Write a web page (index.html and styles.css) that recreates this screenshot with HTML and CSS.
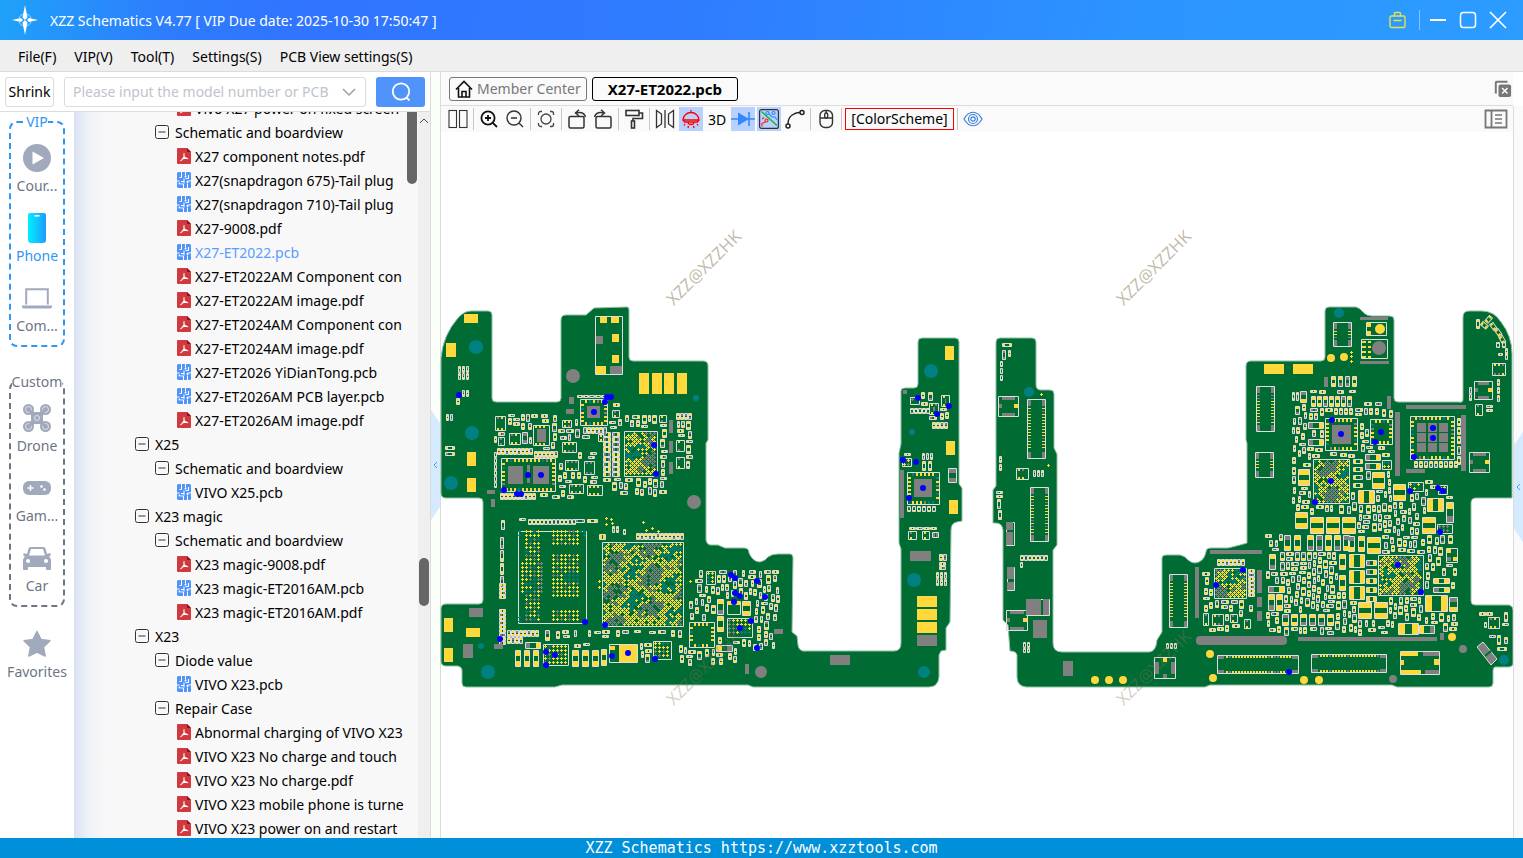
FILE: index.html
```html
<!DOCTYPE html>
<html lang="en">
<head>
    <meta charset="UTF-8">
    <meta name="viewport" content="width=device-width, initial-scale=1.0">
    <title>XZZ Schematics</title>
    <link rel="stylesheet" href="styles.css">
</head>
<body>
    <!-- shared icons -->
    <svg class="defs" aria-hidden="true">
        <symbol id="pdf" viewBox="0 0 14 16">
            <path d="M1 0h9l4 4v11a1 1 0 0 1-1 1H1a1 1 0 0 1-1-1V1a1 1 0 0 1 1-1z" fill="#d0393e"/>
            <path d="M10 0v4h4z" fill="#8f1418"/>
            <path d="M7 5.500v3.200c-.5 1.600-1.500 3-3.200 4M7 8.700c1 1.300 2.200 2 3.800 2M5.200 11c1.300-.7 2.700-1 4.300-.9" fill="none" stroke="#fff" stroke-width="1.100" stroke-linecap="round"/>
        </symbol>
        <symbol id="pcb" viewBox="0 0 14 16">
            <rect width="14" height="16" rx="1.500" fill="#4f93fb"/>
            <path d="M4.500 0v5.500H2.500M8.500 0v3.500M8.500 6.500h3V3M0 9h2.500M4 9.500h3v-3M6.500 16v-4H4M10.500 16v-4.500M10.500 9h3.500M7 9.500v2" fill="none" stroke="#fff" stroke-width="1"/>
            <circle cx="8.500" cy="4.500" r="1" fill="#fff"/>
            <circle cx="2.500" cy="11.500" r="1" fill="#fff"/>
            <circle cx="10.500" cy="10" r="1" fill="#fff"/>
        </symbol>
        <symbol id="minus" viewBox="0 0 14 14">
            <rect x=".5" y=".5" width="13" height="13" rx="2" fill="none" stroke="#333"/>
            <path d="M3.500 7h7" stroke="#333"/>
        </symbol>
    </svg>

    <header class="titlebar">
        <svg class="logo" viewBox="0 0 28 32">
            <path d="M14 1l2.500 12.500L14 16l-2.500-2.500zM14 31l2.500-12.500L14 16l-2.500 2.500zM1 16l9-2 2 2-2 2zM27 16l-9-2-2 2 2 2z" fill="#fff"/>
            <path d="M8 14a6.500 6.500 0 0 1 4-4M16 10a6.500 6.500 0 0 1 4 4M20 18a6.500 6.500 0 0 1-4 4M12 22a6.500 6.500 0 0 1-4-4" fill="none" stroke="#9fd4ff"/>
        </svg>
        <h1>XZZ Schematics V4.77 [ VIP Due date: 2025-10-30 17:50:47 ]</h1>
        <div class="window-buttons">
            <button aria-label="Toolbox"><svg viewBox="0 0 18 18" fill="none" stroke="#e3e34a" stroke-width="1.400"><rect x="1" y="5" width="15" height="11.500" rx="1.500"/><path d="M5.500 5V2.500a1 1 0 0 1 1-1h4a1 1 0 0 1 1 1V5M4.500 9.500h8"/></svg></button>
            <span class="divider"></span>
            <button aria-label="Minimize"><svg viewBox="0 0 18 18" stroke="#fff" stroke-width="2"><path d="M1 9h16"/></svg></button>
            <button aria-label="Maximize"><svg viewBox="0 0 18 18" fill="none" stroke="#fff" stroke-width="1.500"><rect x="1.500" y="1.500" width="15" height="15" rx="3"/></svg></button>
            <button aria-label="Close"><svg viewBox="0 0 18 18" stroke="#fff" stroke-width="1.700"><path d="M1 1l16 16M17 1L1 17"/></svg></button>
        </div>
    </header>

    <nav class="menubar">
        <a href="#">File(F)</a>
        <a href="#">VIP(V)</a>
        <a href="#">Tool(T)</a>
        <a href="#">Settings(S)</a>
        <a href="#">PCB View settings(S)</a>
    </nav>

    <main class="workspace">
        <aside class="panel">
            <form class="search">
                <button type="button" class="shrink">Shrink</button>
                <div class="combo">
                    <input type="text" aria-label="Model number" placeholder="Please input the model number or PCB">
                    <svg viewBox="0 0 14 8"><path d="M1 1l6 6 6-6" fill="none" stroke="#999fa8" stroke-width="1.500"/></svg>
                </div>
                <button type="button" class="go" aria-label="Search"><svg viewBox="0 0 20 20" fill="none" stroke="#fff" stroke-width="1.800"><circle cx="10" cy="9.500" r="8.200"/><path d="M15.500 15.500l3 3"/></svg></button>
            </form>
            <div class="browser">
                <div class="categories">
                    <fieldset class="group vip">
                        <legend>VIP</legend>
                        <button class="cat">
                            <svg viewBox="0 0 28 28"><circle cx="14" cy="14" r="14" fill="#a1a9bd"/><path d="M9.500 7.500l11.500 6.500-11.500 6.500z" fill="#fff"/></svg>
                            <span>Cour...</span>
                        </button>
                        <button class="cat active">
                            <svg viewBox="0 0 28 28"><defs><linearGradient id="phone"><stop offset="0" stop-color="#00efff"/><stop offset="1" stop-color="#1e9cff"/></linearGradient></defs><path d="M7 -1h14a2 2 0 0 1 2 2v25a3 3 0 0 1-3 3H8a3 3 0 0 1-3-3V1a2 2 0 0 1 2-2z" fill="url(#phone)"/><path d="M11.500 1.800h5" stroke="#fff" stroke-width="1.500"/></svg>
                            <span>Phone</span>
                        </button>
                        <button class="cat">
                            <svg viewBox="0 0 28 28"><path d="M3.200 20.500V5.200h21.600v15.300" fill="none" stroke="#a1a9bd" stroke-width="2"/><path d="M-1 21.500h30v1.500a2 2 0 0 1-2 1.500H1a2 2 0 0 1-2-1.500z" fill="#a1a9bd"/></svg>
                            <span>Com...</span>
                        </button>
                    </fieldset>
                    <fieldset class="group custom">
                        <legend>Custom</legend>
                        <button class="cat">
                            <svg viewBox="0 0 28 28"><g fill="#a1a9bd"><circle cx="5.500" cy="5.500" r="5.500"/><circle cx="22.500" cy="5.500" r="5.500"/><circle cx="5.500" cy="22.500" r="5.500"/><circle cx="22.500" cy="22.500" r="5.500"/><path d="M6 3l5 5h6l5-5 3 3-5 5v6l5 5-3 3-5-5h-6l-5 5-3-3 5-5v-6L3 6z"/></g><g fill="none" stroke="#dfe2ea"><circle cx="5.500" cy="5.500" r="3"/><circle cx="22.500" cy="5.500" r="3"/><circle cx="5.500" cy="22.500" r="3"/><circle cx="22.500" cy="22.500" r="3"/><circle cx="14" cy="14" r="2.500"/></g><path d="M5 5l6 6M23 5l-6 6M5 23l6-6M23 23l-6-6" stroke="#a1a9bd" stroke-width="3"/></svg>
                            <span>Drone</span>
                        </button>
                        <button class="cat">
                            <svg viewBox="0 0 28 28"><rect y="7" width="28" height="14" rx="6" fill="#a1a9bd"/><path d="M4.500 14h6M7.500 11v6" stroke="#fff" stroke-width="1.500"/><circle cx="18.500" cy="12.500" r="1.300" fill="#fff"/><circle cx="21.500" cy="15.500" r="1.300" fill="#fff"/></svg>
                            <span>Gam...</span>
                        </button>
                        <button class="cat">
                            <svg viewBox="0 0 28 28"><path fill-rule="evenodd" d="M7.500 3h13a2 2 0 0 1 2 1.500L24 10l3.500-1v3H26l2 3.500V25a1 1 0 0 1-1 1h-3a1 1 0 0 1-1-1v-2H5v2a1 1 0 0 1-1 1H1a1 1 0 0 1-1-1v-9.500L2 12H.5V9L4 10l1.500-5.500a2 2 0 0 1 2-1.500zM8 5l-2 6.500h16L20 5zM5 15a2 2 0 1 0 .1 4A2 2 0 0 0 5 15zm18 0a2 2 0 1 0 .1 4 2 2 0 0 0-.1-4z" fill="#a1a9bd"/></svg>
                            <span>Car</span>
                        </button>
                    </fieldset>
                    <button class="cat favorites">
                        <svg viewBox="0 0 28 28"><path d="M14 1.500l4 8 9 1.200-6.500 6.300 1.600 9L14 22l-8.100 4 1.600-9L1 10.700l9-1.200z" fill="#a1a9bd" stroke="#a1a9bd" stroke-width="1.500" stroke-linejoin="round"/></svg>
                        <span>Favorites</span>
                    </button>
                </div>

                <div class="tree-view">
                    <ul class="tree">
                        <li class="file"><svg><use href="#pdf"/></svg>Vivo X27 power on fixed screen</li>
                        <li class="folder"><svg><use href="#minus"/></svg>Schematic and boardview</li>
                        <li class="file"><svg><use href="#pdf"/></svg>X27 component notes.pdf</li>
                        <li class="file"><svg><use href="#pcb"/></svg>X27(snapdragon 675)-Tail plug</li>
                        <li class="file"><svg><use href="#pcb"/></svg>X27(snapdragon 710)-Tail plug</li>
                        <li class="file"><svg><use href="#pdf"/></svg>X27-9008.pdf</li>
                        <li class="file selected"><svg><use href="#pcb"/></svg>X27-ET2022.pcb</li>
                        <li class="file"><svg><use href="#pdf"/></svg>X27-ET2022AM Component con</li>
                        <li class="file"><svg><use href="#pdf"/></svg>X27-ET2022AM image.pdf</li>
                        <li class="file"><svg><use href="#pdf"/></svg>X27-ET2024AM Component con</li>
                        <li class="file"><svg><use href="#pdf"/></svg>X27-ET2024AM image.pdf</li>
                        <li class="file"><svg><use href="#pcb"/></svg>X27-ET2026 YiDianTong.pcb</li>
                        <li class="file"><svg><use href="#pcb"/></svg>X27-ET2026AM PCB layer.pcb</li>
                        <li class="file"><svg><use href="#pdf"/></svg>X27-ET2026AM image.pdf</li>
                        <li class="model"><svg><use href="#minus"/></svg>X25</li>
                        <li class="folder"><svg><use href="#minus"/></svg>Schematic and boardview</li>
                        <li class="file"><svg><use href="#pcb"/></svg>VIVO X25.pcb</li>
                        <li class="model"><svg><use href="#minus"/></svg>X23 magic</li>
                        <li class="folder"><svg><use href="#minus"/></svg>Schematic and boardview</li>
                        <li class="file"><svg><use href="#pdf"/></svg>X23 magic-9008.pdf</li>
                        <li class="file"><svg><use href="#pcb"/></svg>X23 magic-ET2016AM.pcb</li>
                        <li class="file"><svg><use href="#pdf"/></svg>X23 magic-ET2016AM.pdf</li>
                        <li class="model"><svg><use href="#minus"/></svg>X23</li>
                        <li class="folder"><svg><use href="#minus"/></svg>Diode value</li>
                        <li class="file"><svg><use href="#pcb"/></svg>VIVO X23.pcb</li>
                        <li class="folder"><svg><use href="#minus"/></svg>Repair Case</li>
                        <li class="file"><svg><use href="#pdf"/></svg>Abnormal charging of VIVO X23</li>
                        <li class="file"><svg><use href="#pdf"/></svg>VIVO X23 No charge and touch</li>
                        <li class="file"><svg><use href="#pdf"/></svg>VIVO X23 No charge.pdf</li>
                        <li class="file"><svg><use href="#pdf"/></svg>VIVO X23 mobile phone is turne</li>
                        <li class="file"><svg><use href="#pdf"/></svg>VIVO X23 power on and restart</li>
                    </ul>
                    <div class="inner-thumb"></div>
                </div>
                <div class="scrollbar">
                    <svg viewBox="0 0 10 6"><path d="M1 5l4-4 4 4" fill="none" stroke="#444"/></svg>
                    <div class="thumb"></div>
                </div>
            </div>
        </aside>

        <div class="splitter"><button class="handle" aria-label="Collapse left panel"><svg viewBox="0 0 5 8"><path d="M4 1L1 4l3 3" fill="none" stroke="#4d9fe8"/></svg></button></div>

        <section class="viewer">
            <div class="tabs">
                <button class="tab"><svg viewBox="0 0 18 18" fill="none" stroke="#111" stroke-width="1.600"><path d="M1 9.500L9 1.500l8 8M3.500 8v9h11V8M7 17v-5.500h4V17"/></svg>Member Center</button>
                <button class="tab current">X27-ET2022.pcb</button>
                <button class="icon close-all" aria-label="Close all"><svg viewBox="0 0 20 20"><path d="M2 15V3a1 1 0 0 1 1-1h12" fill="none" stroke="#777" stroke-width="2.200"/><rect x="5" y="5" width="14" height="14" rx="2" fill="#777"/><path d="M9 9l6 6M15 9l-6 6" stroke="#fff" stroke-width="1.600"/></svg></button>
            </div>
            <div class="toolbar">
                <button class="icon" aria-label="Split view"><svg viewBox="0 0 20 20" fill="none" stroke="#333" stroke-width="1.100"><rect x="1" y="1.500" width="7.500" height="17"/><rect x="11.500" y="1.500" width="7.500" height="17"/></svg></button>
                <span class="sep"></span>
                <button class="icon" aria-label="Zoom in"><svg viewBox="0 0 20 20" fill="none" stroke="#111" stroke-width="1.800"><circle cx="9" cy="9" r="6.600"/><path d="M13.800 13.800L18 18M6 9h6M9 6v6"/></svg></button>
                <button class="icon" aria-label="Zoom out"><svg viewBox="0 0 20 20" fill="none" stroke="#333" stroke-width="1.400"><circle cx="9" cy="9" r="7"/><path d="M14 14l4 4M6 9h6"/></svg></button>
                <span class="sep"></span>
                <button class="icon" aria-label="Fit"><svg viewBox="0 0 20 20" fill="none" stroke="#444" stroke-width="1.300"><circle cx="10" cy="10" r="5"/><path d="M2.500 6V4.500a2 2 0 0 1 2-2H6M14 2.500h1.500a2 2 0 0 1 2 2V6M17.500 14v1.500a2 2 0 0 1-2 2H14M6 17.500H4.500a2 2 0 0 1-2-2V14"/></svg></button>
                <span class="sep"></span>
                <button class="icon" aria-label="Rotate left"><svg viewBox="0 0 20 20" fill="none" stroke="#333" stroke-width="1.500"><rect x="2" y="7.500" width="15" height="11.500" rx="1.500"/><path d="M9 4c4-1 8-1 9.500 4M12 .8L8.500 4l3.500 3"/></svg></button>
                <button class="icon" aria-label="Rotate right"><svg viewBox="0 0 20 20" fill="none" stroke="#333" stroke-width="1.500"><rect x="3" y="7.500" width="15" height="11.500" rx="1.500"/><path d="M11 4C7 3 3 3 1.500 8M8 .8L11.500 4 8 7"/></svg></button>
                <span class="sep"></span>
                <button class="icon" aria-label="Paint"><svg viewBox="0 0 20 20" fill="none" stroke="#333" stroke-width="1.600"><rect x="2" y="1.500" width="13" height="5"/><path d="M15 4h3.500v5.500H9V12"/><rect x="7.500" y="12" width="3" height="7"/></svg></button>
                <span class="sep"></span>
                <button class="icon" aria-label="Mirror"><svg viewBox="0 0 20 20" fill="none" stroke="#333" stroke-width="1.300"><path d="M1.500 1.500v17l5-3.500V5zM18.500 1.500v17l-5-3.500V5zM10 1v18"/></svg></button>
                <button class="icon on" aria-label="Highlight"><svg viewBox="0 0 20 20" fill="none" stroke="#f00" stroke-width="1.300"><path d="M2 11a8 7.500 0 0 1 16 0zM10 1v2.500M2 11l1.500 2h13L18 11M7 13a3 2.500 0 0 0 6 0M4 15l-1 1.500M16 15l1 1.500M7.500 17l-.5 2M12.500 17l.5 2"/></svg></button>
                <button class="icon text">3D</button>
                <button class="icon on" aria-label="Diode"><svg class="wide" viewBox="0 0 24 20"><path d="M0 10h24M18 3v14" stroke="#3388ff" stroke-width="1.600"/><path d="M7 3.500l11 6.500-11 6.500z" fill="#3388ff"/></svg></button>
                <button class="icon on" aria-label="Net"><svg viewBox="0 0 20 20" fill="none" stroke-width="1.200"><rect x=".6" y=".6" width="18.800" height="18.800" rx="2" stroke="#333"/><path d="M2.500 2.500L18 16.500" stroke="#13b83c" stroke-width="1.500"/><circle cx="8.500" cy="4" r="1.500" stroke="#38f"/><path d="M10 5l3 3h3l2 3" stroke="#38f"/><circle cx="14.500" cy="4" r="1.500" stroke="#38f"/><circle cx="7.500" cy="11.500" r="1.500" stroke="#f22"/><path d="M6.500 13L3 14.500v3M3 10l2-1.500" stroke="#f22"/></svg></button>
                <button class="icon" aria-label="Curve"><svg viewBox="0 0 20 20" fill="none" stroke="#222" stroke-width="1.500"><circle cx="17" cy="3.500" r="2"/><circle cx="3" cy="17" r="2"/><path d="M3 15C3 8 8 4 15 3.500"/></svg></button>
                <span class="sep"></span>
                <button class="icon" aria-label="Mouse"><svg viewBox="0 0 20 20" fill="none" stroke="#333" stroke-width="1.400"><rect x="4" y="1.500" width="12.500" height="17" rx="5"/><path d="M4 9h12.500M10.200 1.500V4"/><rect x="8.700" y="4" width="3" height="5" rx="1.500"/></svg></button>
                <span class="sep"></span>
                <button class="scheme">[ColorScheme]</button>
                <span class="sep"></span>
                <button class="icon" aria-label="View"><svg viewBox="0 0 20 20" fill="none" stroke="#3d7fd9" stroke-width="1.200"><path d="M1 10c5-9 13-9 18 0-5 9-13 9-18 0z"/><circle cx="10" cy="10" r="4.500"/><circle cx="10" cy="10" r="2.200"/></svg></button>
                <button class="icon list" aria-label="List"><svg class="wide" viewBox="0 0 24 20" fill="none" stroke="#777" stroke-width="1.800"><path d="M1.500 1.500h21v17h-21zM7.500 1.500v17"/><path d="M11 6h7M11 10h7M11 14h7" stroke-width="1.300"/></svg></button>
            </div>
            <div class="canvas">
                <svg id="board" viewBox="441 132 1072 706" role="img" aria-label="Boardview"></svg>
            </div>
        </section>
        <div class="splitter right"><button class="handle" aria-label="Open right panel"><svg viewBox="0 0 5 8"><path d="M4 1L1 4l3 3" fill="none" stroke="#4d9fe8"/></svg></button></div>
    </main>

    <footer class="statusbar">XZZ Schematics https://www.xzztools.com</footer>
    <script src="board.js"></script>
</body>
</html>
```
FILE: styles.css
```css
* {
    box-sizing: border-box;
}
body {
    margin: 0;
    height: 100vh;
    display: flex;
    flex-direction: column;
    overflow: hidden;
    font-family: "Noto Sans", "Noto Sans CJK SC", sans-serif;
    font-size: 14px;
    color: #000;
    background: #fff;
}
button {
    font: inherit;
    color: inherit;
    background: none;
    border: none;
    padding: 0;
    cursor: pointer;
}
svg {
    display: block;
    overflow: visible;
}
.defs {
    position: absolute;
    width: 0;
    height: 0;
}

/* title bar */
.titlebar {
    flex: none;
    height: 40px;
    display: flex;
    align-items: center;
    gap: 11px;
    padding: 0 16px 0 11px;
    color: #fff;
    background: linear-gradient(100deg, #1fa2f9 0, #2d7dfd 11%, #3074ff 20%, #2f7cff 45%, #2c94ff 75%, #2c9cff 100%);
}
.logo {
    width: 28px;
    height: 32px;
}
.titlebar h1 {
    margin: 0;
    font-size: 14px;
    font-weight: normal;
}
.window-buttons {
    display: flex;
    align-items: center;
    gap: 12px;
    margin-left: auto;
}
.window-buttons button,
.window-buttons svg {
    width: 18px;
    height: 18px;
}
.window-buttons .divider {
    width: 1px;
    height: 20px;
    margin-right: -3px;
    background: #83c3ff;
}

/* menu */
.menubar {
    flex: none;
    height: 32px;
    display: flex;
    align-items: center;
    gap: 18px;
    padding: 2px 18px 0;
    background: #efefef;
    border-bottom: 1px solid #dcdcdc;
}
.menubar a {
    color: #000;
    text-decoration: none;
}

.workspace {
    flex: 1;
    min-height: 0;
    display: flex;
}

/* left panel */
.panel {
    width: 431px;
    display: flex;
    flex-direction: column;
    border-right: 1px solid #dcdcdc;
}
.search {
    flex: none;
    height: 40px;
    display: flex;
    align-items: center;
    gap: 10px;
    padding: 0 5px;
    border-bottom: 1px solid #dcdcdc;
}
.shrink {
    width: 49px;
    height: 30px;
    border: 1px solid #dcdcdc;
    border-radius: 3px;
}
.combo {
    flex: 1;
    height: 30px;
    display: flex;
    align-items: center;
    gap: 7px;
    padding: 0 9px 0 8px;
    border: 1px solid #dcdcdc;
    border-radius: 3px;
}
.combo input {
    flex: 1;
    min-width: 0;
    padding: 0;
    border: none;
    outline: none;
    font: inherit;
}
.combo input::placeholder {
    color: #c0c4cc;
}
.combo svg {
    width: 14px;
    height: 8px;
}
.go {
    width: 49px;
    height: 30px;
    display: flex;
    align-items: center;
    justify-content: center;
    border-radius: 3px;
    background: #4f93fb;
}
.go svg {
    width: 20px;
    height: 20px;
}
.browser {
    flex: 1;
    min-height: 0;
    display: flex;
}
.categories {
    width: 74px;
    flex: none;
    color: #6d7585;
}
.group {
    min-width: 0;
    height: 235px;
    margin: 0 9px;
    padding: 12px 0 0;
    border: 2px dashed #2f97f3;
    border-radius: 8px;
}
.group legend {
    margin: 0 auto;
    padding: 0;
    line-height: 20px;
}
.vip legend {
    color: #2f97f3;
}
.custom {
    margin-top: 25px;
    border-color: #6d7585;
}
.cat {
    width: 100%;
    height: 70px;
    display: flex;
    flex-direction: column;
    align-items: center;
    gap: 4px;
}
.cat svg {
    width: 28px;
    height: 28px;
}
.cat span {
    line-height: 20px;
}
.cat.active {
    color: #2f97f3;
}
.favorites {
    margin-top: 23px;
}

/* file tree */
.tree-view {
    position: relative;
    flex: 1;
    min-width: 0;
    overflow: hidden;
    background: linear-gradient(90deg, #d9e1f2 0, #eef1f6 14px, #f8f8f8 34px);
}
.tree {
    list-style: none;
    margin: -16px 11px 0 0;
    padding: 0;
    overflow: hidden;
}
.tree li {
    height: 24px;
    display: flex;
    align-items: center;
    gap: 4px;
    white-space: nowrap;
}
.tree svg {
    flex: none;
    width: 14px;
    height: 16px;
}
.tree .model,
.tree .folder {
    gap: 6px;
}
.tree .model svg,
.tree .folder svg {
    height: 14px;
}
.tree .model {
    padding-left: 61px;
}
.tree .folder {
    padding-left: 81px;
}
.tree .file {
    padding-left: 103px;
}
.tree .selected {
    color: #5c9bff;
}
.inner-thumb {
    position: absolute;
    top: 0;
    right: 1px;
    width: 10px;
    height: 72px;
    border-radius: 0 0 5px 5px;
    background: #666;
}
.scrollbar {
    width: 12px;
    padding: 6px 1px;
    background: #efefef;
}
.scrollbar svg {
    width: 10px;
    height: 6px;
}
.thumb {
    height: 48px;
    margin-top: 434px;
    border-radius: 5px;
    background: #666;
}

/* splitters with the collapse handles */
.splitter {
    width: 9px;
    flex: none;
    display: flex;
    align-items: center;
    background: #fafffa;
}
.splitter .handle {
    width: 9px;
    height: 110px;
    margin-top: 20px;
    padding: 0 2px;
    background: #d5eaff;
    clip-path: polygon(0 0, 100% 12%, 100% 88%, 0 100%);
}
.splitter svg {
    width: 5px;
    height: 8px;
}
.splitter.right {
    width: 10px;
    margin-top: 34px;
    border-left: 1px solid #dcdcdc;
    background: #fafafa;
}
.splitter.right .handle {
    margin-top: 30px;
    clip-path: polygon(0 12%, 100% 0, 100% 100%, 0 88%);
}

/* viewer */
.viewer {
    flex: 1;
    min-width: 0;
    display: flex;
    flex-direction: column;
    border-left: 1px solid #dcdcdc;
}
.tabs {
    flex: none;
    height: 34px;
    display: flex;
    align-items: center;
    gap: 5px;
    padding-left: 8px;
    background: #fafafa;
    border-bottom: 1px solid #dcdcdc;
}
.tab {
    height: 24px;
    display: flex;
    align-items: center;
    gap: 4px;
    padding: 0 5px;
    border: 1px solid #777;
    border-radius: 3px;
    color: #777;
}
.tab svg {
    width: 18px;
    height: 18px;
}
.tab.current {
    padding: 0 15px;
    border-color: #000;
    color: #000;
    font-size: 15px;
    font-weight: bold;
}
.toolbar {
    flex: none;
    height: 26px;
    display: flex;
    align-items: center;
    gap: 2px;
    padding: 0 5px;
    background: #fafafa;
}
.icon {
    width: 24px;
    height: 24px;
    flex: none;
    display: flex;
    align-items: center;
    justify-content: center;
}
.icon svg {
    width: 20px;
    height: 20px;
}
.close-all {
    width: 20px;
    margin-left: auto;
}
.close-all svg {
    width: 18px;
    height: 18px;
}
.icon .wide {
    width: 24px;
}
.icon.on {
    background: #b8d2fd;
}
.sep {
    width: 1px;
    height: 22px;
    margin: 0 1px;
    background: #c8c8c8;
}
.scheme {
    width: 109px;
    height: 22px;
    border: 1px solid #f00;
    line-height: 20px;
}
.list {
    margin-left: auto;
}
.canvas {
    flex: 1;
    min-height: 0;
    background: #fff;
}
#board {
    width: 100%;
    height: 100%;
}
.soldermask {
    fill: #006b33;
    stroke: #8fbfa3;
}
.frames {
    fill: none;
    stroke: #dedede;
}
.watermark {
    font-size: 17px;
    fill: #8a7a5c;
    fill-opacity: 0.5;
    text-anchor: middle;
}
.watermark.low {
    fill-opacity: 0.35;
}

.statusbar {
    flex: none;
    height: 20px;
    line-height: 20px;
    text-align: center;
    color: #fff;
    background: #0090d9;
    font-family: "DejaVu Sans Mono", monospace;
    font-size: 15px;
}
```
FILE: board.js
```js
const svgNS = "http://www.w3.org/2000/svg";
const board = document.getElementById("board");

const Y = "#ffd83c", G = "#808080", T = "#008080", B = "#0000ff";
const paths = { [Y]: [], [G]: [], [T]: [], [B]: [] };
const frames = [];
const used = new Uint8Array(1600 * 860);

let seed = 7;
function rnd() {
    seed = (seed * 16807) % 2147483647;
    return seed / 2147483647;
}

function el(name, attrs, text) {
    const node = document.createElementNS(svgNS, name);
    for (const key in attrs) node.setAttribute(key, attrs[key]);
    if (text) node.textContent = text;
    board.appendChild(node);
}

function mark(x, y, w, h) {
    for (let j = Math.floor(y); j <= y + h; j++)
        for (let i = Math.floor(x); i <= x + w; i++) used[j * 1600 + i] = 1;
}
function isFree(x, y, w, h) {
    for (let j = y; j <= y + h; j++)
        for (let i = x; i <= x + w; i++) if (used[j * 1600 + i]) return false;
    return true;
}
function rect(c, x, y, w, h) {
    paths[c].push(`M${x} ${y}h${w}v${h}h${-w}z`);
}
function pad(c, x, y, w, h) {
    rect(c, x, y, w, h);
    mark(x, y, w, h);
}
function frame(x, y, w, h) {
    frames.push(`M${x + 0.5} ${y + 0.5}h${w - 1}v${h - 1}h${1 - w}z`);
    mark(x, y, w, h);
}
function dot(c, x, y, r) {
    paths[c].push(`M${x - r} ${y}a${r} ${r} 0 1 0 ${2 * r} 0a${r} ${r} 0 1 0 ${-2 * r} 0z`);
    mark(x - r, y - r, 2 * r, 2 * r);
}
function cross(c, x, y) {
    paths[c].push(`M${x} ${y + 1}h3v1h-3zM${x + 1} ${y}h1v3h-1z`);
}

// two-terminal part: frame with a pad at each end
function smd(x, y, w, h, c1, c2) {
    c1 = c1 || (rnd() < 0.72 ? Y : G);
    c2 = c2 || (rnd() < 0.72 ? Y : G);
    frame(x, y, w, h);
    if (w > h) {
        const p = Math.max(1, Math.round((w - 2) * 0.3));
        rect(c1, x + 1, y + 1, p, h - 2);
        rect(c2, x + w - 1 - p, y + 1, p, h - 2);
    } else {
        const p = Math.max(1, Math.round((h - 2) * 0.3));
        rect(c1, x + 1, y + 1, w - 2, p);
        rect(c2, x + 1, y + h - 1 - p, w - 2, p);
    }
}
function row(x, y, n, dx, dy, w, h, c1, c2) {
    for (let i = 0; i < n; i++) smd(x + i * dx, y + i * dy, w, h, c1, c2);
}

// small multi-pin chip
function chip(x, y, w, h, center) {
    frame(x, y, w, h);
    for (let i = 2; i < w - 3; i += 4) {
        rect(rnd() < 0.6 ? Y : G, x + i, y + 1, 2, 2);
        rect(rnd() < 0.6 ? Y : G, x + i, y + h - 3, 2, 2);
    }
    if (center) rect(center, x + 4, y + 4, w - 8, h - 8);
}

// pads all round the frame
function qfn(x, y, w, h) {
    frame(x, y, w, h);
    const pick = () => { const v = rnd(); return v < 0.75 ? Y : v < 0.88 ? G : T; };
    for (let i = 5; i < w - 5; i += 4) {
        rect(pick(), x + i, y + 1, 2, 3);
        rect(pick(), x + i, y + h - 4, 2, 3);
    }
    for (let i = 5; i < h - 5; i += 4) {
        rect(pick(), x + 1, y + i, 3, 2);
        rect(pick(), x + w - 4, y + i, 3, 2);
    }
}

// board to board connector
function conn(x, y, w, h) {
    frame(x, y, w, h);
    const v = h > w;
    const len = v ? h : w;
    for (let i = 9; i < len - 9; i += 3) {
        const c = rnd() < 0.85 ? Y : G;
        if (v) { rect(c, x + 1, y + i, 3, 1); rect(c, x + w - 4, y + i, 3, 1); }
        else { rect(c, x + i, y + 1, 2, 2); rect(c, x + i, y + h - 3, 2, 2); }
    }
    const a = v ? 3 : 6, b = v ? 6 : 3;
    rect(G, x + 1, y + 1, a, b);
    rect(G, x + w - 1 - a, y + 1, a, b);
    rect(G, x + 1, y + h - 1 - b, a, b);
    rect(G, x + w - 1 - a, y + h - 1 - b, a, b);
}

// coax sockets and switches
function socket(x, y, w, h) {
    frame(x, y, w, h);
    rect(G, x + 4, y + 1, w - 8, 3);
    rect(G, x + 4, y + h - 4, w - 8, 3);
    rect(G, x + 1, y + Math.floor(h / 2) - 2, 3, 4);
    rect(Y, x + w - 5, y + Math.floor(h / 2) - 2, 4, 4);
}

// ball grid; checker adds the in-between balls of the fine pitch packages
function bga(x, y, w, h, checker) {
    frame(x, y, w, h);
    for (let j = 1, r = 0; j < h - 3; j += checker ? 2 : 4, r++) {
        for (let i = 1 + (checker && r % 2 ? 2 : 0); i < w - 3; i += 4) {
            if (checker && rnd() < 0.12) continue;
            const v = Math.sin((x + i) / 6) + Math.cos((y + j) / 5 + i / 11) + rnd() * 1.8 - 0.9;
            cross(v > 0.7 ? G : v < -1.2 ? T : Y, x + i, y + j);
        }
    }
}

// packs small parts into the free space of an area
function fill(x, y, w, h, density) {
    const sizes = [[4, 7], [4, 7], [7, 4], [8, 4], [4, 8], [3, 7], [7, 3], [5, 9]];
    for (let j = y; j < y + h - 3; j++)
        for (let i = x; i < x + w - 3; i++) {
            if (used[j * 1600 + i] || rnd() > density) continue;
            const s = sizes[Math.floor(rnd() * sizes.length)];
            if (i + s[0] <= x + w + 1 && j + s[1] <= y + h + 1 && isFree(i, j, s[0], s[1])) smd(i, j, s[0], s[1]);
        }
}

// board outlines
const left = "M471 311H488Q492 311 492 315V398Q492 402 496 402H557Q561 402 561 398V320Q561 315 566 315H586L594 308L627 307Q629 307 629 310V357Q629 361 633 361H703Q708 361 708 366V440L706 443V540Q707 545 711 545H718L725 548H744Q749 548 749 553Q753 562 760 562Q765 561 768 557Q772 554 778 554H790Q793 554 793 558L792 632L797 636L798 645Q799 652 806 651H894Q901 651 901 643V549L899 543V453L901 444V391Q901 388 905 388H914Q918 388 918 384V342Q918 338 922 338H955Q959 338 959 342V484L962 488V521L957 522Q951 523 951 530L950 622L946 628V650L941 651L939 655V677Q938 687 929 687H753L748 685H562L555 687H466Q462 687 462 683V670Q462 667 458 666H446Q441 666 441 661V609Q441 604 446 604H479Q483 604 483 600V502Q483 498 479 498H446Q441 498 441 493V358Q443 335 458 318Q464 311 471 311Z";
const right = "M1000 338H1032Q1036 338 1036 342V385Q1036 390 1041 390H1050Q1054 390 1054 394V448L1057 454V545L1053 550V643Q1053 652 1062 652H1149Q1156 652 1157 640L1162 632V558Q1162 555 1166 555H1180Q1185 556 1188 560Q1195 566 1202 560Q1205 557 1206 552Q1206 548 1211 548H1228L1240 545L1247 543V443L1246 440V366Q1246 361 1251 361H1321Q1325 361 1325 357V311Q1325 307 1329 307H1356Q1360 308 1364 313Q1367 316 1372 316H1390Q1394 316 1394 320V398Q1394 402 1398 402H1459Q1463 403 1463 399V317Q1463 311 1469 311H1482Q1494 311 1501 322Q1512 336 1512 354V498H1476Q1471 498 1471 503V601Q1471 605 1475 605H1509Q1513 606 1513 610V663Q1513 667 1508 667H1495Q1493 667 1493 671V683Q1493 687 1489 687H1397L1392 685H1210L1205 687H1026Q1017 686 1017 677V655Q1016 651 1010 651L1008 625L1003 620V530Q1002 523 996 523H993V490L996 486V342Q996 338 1000 338Z";
el("path", { class: "soldermask", d: left });
el("path", { class: "soldermask", d: right });

// bare pads and shields
[
    [464, 314, 14, 9], [446, 343, 10, 14], [467, 452, 9, 14], [467, 478, 9, 14],
    [639, 373, 10, 21], [652, 373, 10, 21], [664, 373, 10, 21], [677, 373, 10, 21],
    [444, 618, 9, 14], [466, 628, 14, 9], [444, 648, 9, 14], [945, 346, 9, 14],
    [946, 441, 9, 14], [949, 500, 9, 14], [917, 596, 20, 11], [917, 609, 20, 11],
    [917, 622, 20, 11], [1264, 364, 20, 10], [1293, 364, 20, 10]
].forEach(p => pad(Y, ...p));
[
    [917, 635, 20, 11], [569, 397, 5, 7], [566, 409, 8, 5], [469, 608, 14, 9],
    [463, 644, 10, 14], [494, 644, 9, 5], [487, 490, 8, 4], [491, 499, 4, 8],
    [745, 664, 4, 10], [774, 629, 9, 5], [830, 655, 20, 10], [910, 551, 21, 10],
    [900, 470, 4, 48], [903, 390, 4, 4], [669, 420, 4, 13], [669, 441, 4, 12],
    [669, 462, 4, 12], [1033, 620, 14, 18], [1063, 661, 10, 15], [1360, 317, 28, 3],
    [1360, 361, 29, 3], [1324, 377, 4, 10], [1387, 396, 4, 13], [1395, 412, 5, 64],
    [1406, 405, 60, 4], [1461, 415, 5, 56], [1406, 469, 19, 4], [1210, 550, 52, 4],
    [1195, 567, 4, 51], [1257, 570, 5, 9], [1257, 579, 5, 14], [1257, 597, 5, 10],
    [1257, 611, 5, 10], [1298, 637, 139, 4], [1440, 633, 4, 7], [1200, 636, 83, 9]
].forEach(p => pad(G, ...p));

[[476, 347, 7], [472, 433, 7], [451, 483, 7], [488, 672, 7], [931, 371, 7], [914, 580, 7],
 [924, 672, 6], [1029, 392, 5], [1339, 313, 5], [1504, 660, 5], [696, 398, 3], [481, 646, 3],
 [912, 432, 3]].forEach(c => dot(T, ...c));
[[573, 376, 7], [694, 502, 7], [761, 672, 6], [1463, 649, 4], [1393, 679, 4]].forEach(c => dot(G, ...c));
[[1331, 358, 4], [1344, 357, 4], [1210, 654, 4], [1213, 678, 4],
 [1304, 680, 4], [1319, 680, 4], [1452, 637, 4], [1095, 680, 4], [1109, 680, 4],
 [1123, 680, 4]].forEach(c => dot(Y, ...c));

// left board, upper part
frame(595, 316, 28, 59);
rect(Y, 600, 317, 7, 6); rect(Y, 611, 317, 8, 6); rect(Y, 612, 334, 7, 8);
rect(Y, 612, 355, 7, 8); rect(Y, 596, 366, 10, 8);
rect(G, 596, 336, 7, 8); rect(G, 610, 366, 12, 8);
row(458, 366, 3, 4, 0, 3, 7); row(458, 373, 3, 4, 0, 3, 7); row(462, 390, 2, 4, 0, 3, 7);
row(456, 398, 1, 0, 0, 4, 7); row(446, 414, 2, 4, 0, 3, 7); row(445, 446, 2, 0, 6, 10, 4);
qfn(580, 399, 28, 27); rect(G, 587, 406, 13, 12);
qfn(501, 458, 55, 34);
rect(G, 508, 466, 15, 18); rect(G, 533, 466, 16, 18); rect(G, 527, 465, 3, 18);
bga(624, 431, 34, 46, true);
chip(495, 416, 11, 15); chip(498, 437, 7, 9); chip(509, 433, 12, 12);
chip(533, 425, 17, 21, G); smd(522, 432, 6, 12, G, G);
chip(562, 442, 15, 11); chip(565, 460, 14, 11); chip(584, 461, 11, 14);
chip(569, 484, 15, 10); chip(587, 485, 16, 11); chip(562, 420, 10, 8);
chip(598, 434, 8, 8); chip(676, 440, 9, 12); chip(676, 457, 9, 12);
chip(612, 410, 8, 8); chip(659, 415, 8, 8);
row(603, 432, 9, 0, 5, 8, 5); row(612, 432, 9, 0, 5, 8, 5);
row(583, 427, 6, 4, 0, 4, 7); row(497, 448, 9, 4, 0, 4, 7); row(534, 451, 6, 4, 0, 4, 7);
row(500, 493, 9, 4, 0, 4, 7); row(577, 395, 6, 6, 0, 6, 3);
row(494, 452, 6, 0, 6, 3, 6);
row(676, 413, 4, 4, 0, 4, 7);
fill(494, 414, 66, 44, 0.25);
fill(548, 419, 55, 22, 0.2);
fill(557, 452, 42, 44, 0.2);
fill(600, 403, 24, 80, 0.4);
fill(618, 415, 50, 15, 0.5);
fill(660, 425, 9, 56, 0.3);
fill(676, 413, 16, 58, 0.3);
fill(612, 478, 55, 18, 0.3);
fill(540, 493, 40, 8, 0.3);

// left board, memory and soc
frame(518, 531, 69, 93);
for (let y = 530; y < 621; y += 4) {
    for (let x = 525; x < 540; x += 4) cross(rnd() < 0.55 ? Y : rnd() < 0.35 ? T : G, x, y);
    if (y > 560 && y < 592) { cross(Y, 521, y); cross(G, 540, y); }
    if (y < 545 || (y > 553 && y < 598) || y > 607)
        for (let x = 552; x < 577; x += 4) cross(y > 570 && y < 580 && x > 563 ? T : rnd() < 0.7 ? Y : G, x, y);
}
[[518, 530], [518, 534], [583, 530], [583, 534], [518, 616], [518, 620], [579, 530]].forEach(p => cross(T, ...p));
bga(602, 542, 82, 85, true);
row(528, 519, 12, 4, 0, 4, 6); smd(575, 519, 10, 4); smd(587, 519, 11, 4); smd(519, 518, 7, 3);
smd(501, 520, 4, 10, Y, G); smd(599, 534, 7, 6); row(612, 526, 2, 4, 0, 3, 7); smd(623, 529, 3, 6);
row(636, 533, 12, 4, 0, 4, 7); row(500, 537, 4, 0, 13, 4, 12);
row(499, 583, 4, 0, 4, 7, 4); row(499, 609, 9, 0, 4, 7, 4);
[[605, 517], [610, 518], [605, 523], [611, 522], [642, 521], [651, 527], [657, 530], [645, 529], [598, 580], [598, 586], [689, 580]].forEach(p => cross(Y, ...p));
row(507, 630, 8, 4, 0, 4, 7); row(507, 637, 4, 4, 0, 4, 7); smd(545, 630, 5, 11);
smd(525, 642, 16, 7, G, Y); row(515, 650, 3, 9, 0, 6, 17, Y, Y); row(572, 650, 3, 10, 0, 7, 17, Y, Y);
smd(601, 649, 6, 17); bga(543, 644, 26, 22, false);
frame(609, 644, 29, 19); rect(Y, 619, 645, 18, 17); rect(Y, 610, 646, 5, 4);
bga(653, 641, 19, 19, false);
qfn(689, 622, 26, 26); bga(727, 618, 26, 20, false); bga(706, 571, 10, 14, false);
smd(717, 599, 7, 16); smd(717, 616, 7, 16); smd(716, 645, 17, 7, Y, G);
frame(727, 601, 14, 14); rect(Y, 728, 601, 12, 4); smd(742, 601, 9, 15);
fill(545, 630, 142, 9, 0.1);
fill(570, 643, 32, 6, 0.1);
fill(637, 643, 16, 22, 0.3);
fill(676, 645, 62, 20, 0.2);
fill(727, 653, 14, 14, 0.3);
fill(694, 570, 86, 32, 0.25);
fill(689, 596, 38, 28, 0.2);
fill(752, 600, 26, 52, 0.2);
fill(716, 637, 40, 14, 0.2);

// left board, arm
qfn(907, 472, 33, 33); rect(G, 914, 479, 18, 18);
bga(910, 397, 10, 8, false); bga(902, 458, 10, 9, false);
chip(929, 403, 10, 12, G); chip(941, 395, 9, 12, G);
smd(948, 468, 9, 15, G, G); row(910, 408, 5, 4, 0, 4, 6); row(932, 422, 4, 4, 0, 4, 7);
row(907, 506, 6, 5, 0, 4, 6); row(922, 453, 3, 4, 0, 3, 7); row(922, 461, 2, 6, 0, 4, 10);
row(909, 527, 4, 7, 0, 7, 3); chip(908, 531, 9, 9); chip(922, 531, 8, 9); smd(932, 532, 7, 6);
row(939, 554, 2, 4, 0, 4, 7); row(939, 562, 2, 0, 4, 7, 4); row(936, 572, 3, 4, 0, 3, 7); row(936, 579, 3, 4, 0, 3, 7);
fill(920, 392, 30, 28, 0.2);
fill(901, 453, 20, 5, 0.3);

// right board, arm
smd(1002, 343, 10, 4); smd(1002, 350, 4, 10); smd(1008, 350, 3, 7); row(1000, 361, 3, 0, 7, 3, 6);
socket(998, 396, 21, 21); conn(1027, 399, 19, 60); conn(1030, 487, 19, 55);
chip(1016, 468, 13, 12); row(1033, 470, 3, 4, 0, 3, 7); row(999, 456, 2, 0, 8, 3, 7);
row(996, 491, 2, 0, 4, 7, 3); row(997, 499, 2, 1, 11, 4, 10);
frame(1006, 522, 9, 24); rect(G, 1006, 522, 7, 8); rect(G, 1006, 532, 7, 13);
frame(1007, 567, 8, 24); rect(G, 1007, 567, 7, 12); rect(G, 1007, 582, 7, 8);
frame(1026, 599, 24, 17); rect(G, 1026, 599, 15, 16); rect(G, 1043, 599, 6, 16);
socket(1006, 610, 22, 21); row(1020, 555, 7, 4, 0, 4, 6); row(1023, 642, 2, 4, 0, 3, 6); row(1023, 648, 2, 4, 0, 3, 5);
smd(1020, 562, 3, 6); cross(Y, 1040, 393); cross(Y, 1047, 464);
frame(1154, 657, 22, 22); rect(G, 1155, 662, 4, 12); rect(G, 1171, 662, 4, 12); rect(Y, 1163, 658, 4, 4); rect(G, 1163, 674, 4, 4);
row(1166, 643, 3, 4, 0, 3, 6);

// right board, top
conn(1333, 322, 19, 25); conn(1256, 386, 19, 46); conn(1255, 452, 19, 26); conn(1169, 574, 19, 54);
frame(1366, 322, 21, 14); rect(Y, 1367, 323, 4, 4); rect(Y, 1367, 331, 4, 4); dot(Y, 1380, 329, 5);
frame(1361, 339, 27, 20); dot(G, 1379, 348, 7);
for (let y = 341; y < 357; y += 5) { rect(Y, 1362, y, 4, 2); rect(Y, 1368, y, 3, 2); }
[[1350, 351], [1350, 355], [1350, 360]].forEach(p => cross(Y, ...p));
qfn(1325, 418, 33, 33); rect(G, 1332, 425, 19, 19);
qfn(1370, 419, 23, 26);
qfn(1410, 416, 45, 44);
for (let y = 423; y < 450; y += 10) for (let x = 1417; x < 1445; x += 11) rect(G, x, y, 9, 9);
bga(1313, 459, 37, 45, true);
socket(1474, 381, 19, 19); socket(1469, 452, 21, 21); chip(1475, 404, 8, 12); chip(1492, 363, 14, 13);
smd(1476, 319, 4, 10, Y, Y); row(1497, 379, 3, 0, 8, 3, 7); smd(1486, 405, 7, 3); smd(1486, 409, 7, 3); row(1469, 387, 2, 0, 7, 3, 7);
row(1496, 342, 2, 6, 0, 4, 6); smd(1505, 348, 3, 7); smd(1498, 353, 5, 3); smd(1505, 354, 3, 6);
row(1331, 376, 4, 7, 0, 5, 11); row(1311, 396, 7, 6, 0, 5, 11); smd(1300, 391, 7, 12);
smd(1308, 422, 16, 7, G, Y); smd(1308, 439, 16, 7, G, Y);
smd(1365, 454, 16, 7, G, Y); smd(1365, 463, 16, 7, G, Y); bga(1382, 460, 10, 10, false);
smd(1298, 469, 12, 17, Y, Y); smd(1372, 472, 13, 17, Y, Y); smd(1358, 490, 17, 14, Y, Y);
smd(1393, 484, 13, 17, Y, Y); smd(1427, 498, 17, 14, Y, Y); smd(1446, 502, 8, 21, Y, G);
bga(1408, 482, 16, 10, false); bga(1438, 485, 10, 10, false); bga(1437, 524, 16, 10, false);
row(1414, 461, 9, 5, 0, 4, 7);
row(1457, 418, 3, 0, 9, 4, 8); row(1457, 446, 2, 0, 10, 4, 9);
row(1353, 459, 4, 0, 8, 10, 5);
row(1295, 512, 1, 0, 0, 13, 17, Y, Y); row(1310, 517, 3, 16, 0, 14, 17, Y, Y); smd(1422, 517, 14, 17, Y, Y);
row(1284, 535, 2, 10, 0, 7, 16); row(1307, 535, 5, 9, 0, 7, 16); row(1348, 536, 2, 10, 0, 7, 16);
smd(1367, 537, 14, 17, Y, Y); row(1349, 554, 3, 0, 16, 16, 14, Y, Y);
bga(1378, 555, 46, 41, true); bga(1214, 568, 33, 31, true);
smd(1358, 602, 14, 17, Y, Y); smd(1374, 602, 14, 17, Y, Y); smd(1425, 595, 23, 17, Y, Y);
smd(1449, 597, 9, 15, G, Y); frame(1446, 548, 12, 15); rect(Y, 1447, 549, 4, 4); rect(Y, 1453, 557, 4, 4); rect(G, 1447, 557, 4, 4);
smd(1433, 578, 17, 6); smd(1433, 587, 17, 6);
smd(1269, 554, 7, 16); smd(1268, 586, 17, 7); smd(1268, 594, 7, 17); smd(1276, 594, 7, 17);
row(1282, 614, 6, 9, 0, 7, 12); smd(1398, 623, 21, 12, Y, Y); smd(1419, 625, 16, 9, Y, G);
row(1339, 554, 2, 0, 21, 7, 16); row(1366, 560, 5, 0, 9, 11, 6);
chip(1212, 614, 12, 12); chip(1230, 614, 8, 9); chip(1244, 619, 7, 10); chip(1203, 613, 6, 13);
row(1217, 559, 7, 4, 0, 4, 7); row(1248, 569, 7, 0, 4, 7, 4);
chip(1488, 617, 12, 12); row(1479, 612, 2, 7, 0, 7, 4); smd(1504, 612, 4, 10); smd(1502, 623, 7, 3); smd(1484, 622, 3, 6); smd(1489, 635, 7, 3); smd(1497, 635, 4, 10); smd(1504, 637, 4, 7); smd(1497, 647, 10, 4);
conn(1217, 655, 82, 19); conn(1311, 654, 76, 19);
frame(1400, 651, 40, 24); rect(Y, 1401, 652, 17, 4); rect(Y, 1401, 670, 20, 4); rect(G, 1423, 652, 16, 4); rect(G, 1425, 670, 14, 4); rect(Y, 1401, 660, 3, 5); rect(Y, 1434, 659, 5, 6);
row(1292, 392, 2, 4, 0, 3, 9);
fill(1292, 403, 32, 60, 0.15);
fill(1308, 390, 50, 5, 0.5);
fill(1334, 387, 24, 9, 0.4);
fill(1316, 408, 78, 10, 0.5);
fill(1358, 402, 28, 16, 0.5);
fill(1358, 422, 12, 30, 0.2);
fill(1312, 452, 80, 6, 0.3);
fill(1292, 462, 20, 50, 0.3);
fill(1364, 445, 30, 40, 0.3);
fill(1350, 487, 56, 48, 0.3);
fill(1408, 480, 44, 70, 0.15);
fill(1296, 504, 62, 14, 0.3);
fill(1265, 534, 20, 20, 0.1);
fill(1265, 570, 16, 64, 0.2);
fill(1280, 551, 56, 62, 0.9);
fill(1335, 535, 42, 98, 0.3);
fill(1380, 535, 62, 20, 0.3);
fill(1425, 550, 32, 46, 0.15);
fill(1386, 597, 38, 37, 0.4);
fill(1424, 612, 34, 20, 0.2);
fill(1275, 626, 115, 9, 0.4);
fill(1202, 572, 12, 30, 0.3);
fill(1203, 600, 50, 32, 0.2);

// antenna parts along the round corner
[
    [1484, 325, 40], [1489, 319, 130], [1493, 326, 55], [1498, 332, 55], [1502, 339, 60]
].forEach(a => {
    const t = `translate(${a[0]} ${a[1]}) rotate(${a[2]})`;
    el("path", { class: "frames", transform: t, d: "M-3 -2h7v4h-7z" });
    el("path", { fill: Y, transform: t, d: "M-3 -1h2v3h-2zM2 -1h2v3h-2z" });
});

// probe points
[
    [459, 395], [594, 412], [605, 402], [607, 397], [611, 397], [528, 475], [541, 475], [504, 490],
    [517, 494], [521, 494], [654, 445], [656, 474], [585, 622], [605, 625], [500, 639], [546, 652],
    [555, 655], [546, 665], [628, 653], [612, 656], [655, 659], [731, 575], [735, 578], [735, 593],
    [740, 596], [734, 602], [757, 581], [765, 597], [751, 621], [740, 628], [757, 648], [918, 398],
    [949, 406], [937, 414], [903, 460], [916, 462], [923, 488], [909, 498], [1332, 420], [1341, 434],
    [1381, 432], [1375, 442], [1433, 428], [1433, 438], [1414, 457], [1331, 481], [1315, 502],
    [1410, 491], [1438, 488], [1443, 491], [1440, 532], [1243, 570], [1216, 585], [1398, 565],
    [1421, 592], [1289, 672]
].forEach(p => dot(B, p[0], p[1], 3));

el("path", { class: "frames", d: frames.join("") });
[G, Y, T, B].forEach(c => el("path", { fill: c, d: paths[c].join("") }));
el("rect", { fill: G, x: 1196, y: 636, width: 91, height: 9, rx: 4 });
// tilted part near the lower right edge
el("path", { fill: G, stroke: "#dedede", d: "M1477 647l6 -5l14 17l-6 6z" });
el("path", { stroke: "#006b33", "stroke-width": 2, d: "M1485 656l6 -5" });

[[703, 267], [1153, 267], [703, 667], [1153, 667]].forEach(p =>
    el("text", { class: p[1] > 600 ? "watermark low" : "watermark", transform: `translate(${p[0] + 5} ${p[1] + 5}) rotate(-45)` }, "XZZ@XZZHK"));
```
